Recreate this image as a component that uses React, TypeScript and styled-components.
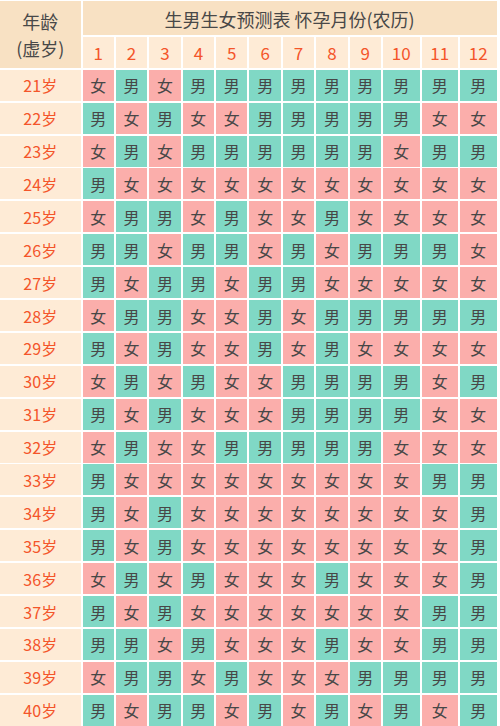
import styled, { createGlobalStyle } from "styled-components";

const GlobalStyle = createGlobalStyle`
  html, body {
    margin: 0;
    padding: 0;
    background: #fff;
  }
  body {
    font-family: "Noto Sans CJK SC", "Noto Sans", sans-serif;
  }
`;

const Chart = styled.div`
  width: 500px;
  box-sizing: border-box;
  padding: 1px 1.4px 0 0;
  background: #fff;
  display: grid;
  grid-template-columns: 80.5px repeat(9, 31.4px) repeat(3, 36.5px);
  grid-template-rows: 34px 31px;
  grid-auto-rows: 31px;
  column-gap: 2px;
  row-gap: 1.9px;
`;

const Cell = styled.div`
  display: flex;
  align-items: center;
  justify-content: center;
  line-height: 1;
`;

const CornerCell = styled(Cell)`
  grid-row: span 2;
  flex-direction: column;
  gap: 9px;
  background: #f8e1c3;
  color: #484848;
  font-size: 18px;
`;

const TitleCell = styled(Cell)`
  grid-column: span 12;
  background: #f8e1c3;
  color: #484848;
  font-size: 18px;
  padding-top: 2px;
`;

const MonthCell = styled(Cell)`
  background: #feebd6;
  color: #f4552a;
  font-size: 17px;
`;

const AgeCell = styled(Cell)`
  background: #feebd6;
  color: #f4552a;
  font-size: 16px;
`;

const ResultCell = styled(Cell)<{ $boy: boolean }>`
  background: ${(p) => (p.$boy ? "#80d8c5" : "#fbaeab")};
  color: #474747;
  font-size: 16px;
`;

const rows: string[] = [
  "女男女男男男男男男男男男",
  "男女男女女男男男男男女女",
  "女男女男男男男男男女男男",
  "男女女女女女女女女女女女",
  "女男男女男女女男女女女女",
  "男男女男男女男女男男男女",
  "男女男男女男男女女女女女",
  "女男男女女男女男男男男男",
  "男女男女女男女男女女女女",
  "女男女男女女男男男男女男",
  "男女男女女女男男男男女女",
  "女男女女男男男男男女女女",
  "男女女女女女女女女女男男",
  "男女男女女女女女女女女男",
  "男女男女女女女女女女女男",
  "女男女男女女女男女女女男",
  "男女男女女女女女女女男男",
  "男男女男女女女男女女男男",
  "女男男女男女女女男男男男",
  "男女男男女男女男女男女男",
];

const months = Array.from({ length: 12 }, (_, i) => i + 1);

const App = () => {
  return (
    <>
      <GlobalStyle />
      <Chart>
        <CornerCell>
          <span>年龄</span>
          <span>(虚岁)</span>
        </CornerCell>
        <TitleCell>生男生女预测表 怀孕月份(农历)</TitleCell>
        {months.map((m) => (
          <MonthCell key={m}>{m}</MonthCell>
        ))}
        {rows.map((row, i) => [
          <AgeCell key={`age-${i}`}>{21 + i}岁</AgeCell>,
          ...row.split("").map((sex, j) => (
            <ResultCell key={`${i}-${j}`} $boy={sex === "男"}>
              {sex}
            </ResultCell>
          )),
        ])}
      </Chart>
    </>
  );
};

export default App;
